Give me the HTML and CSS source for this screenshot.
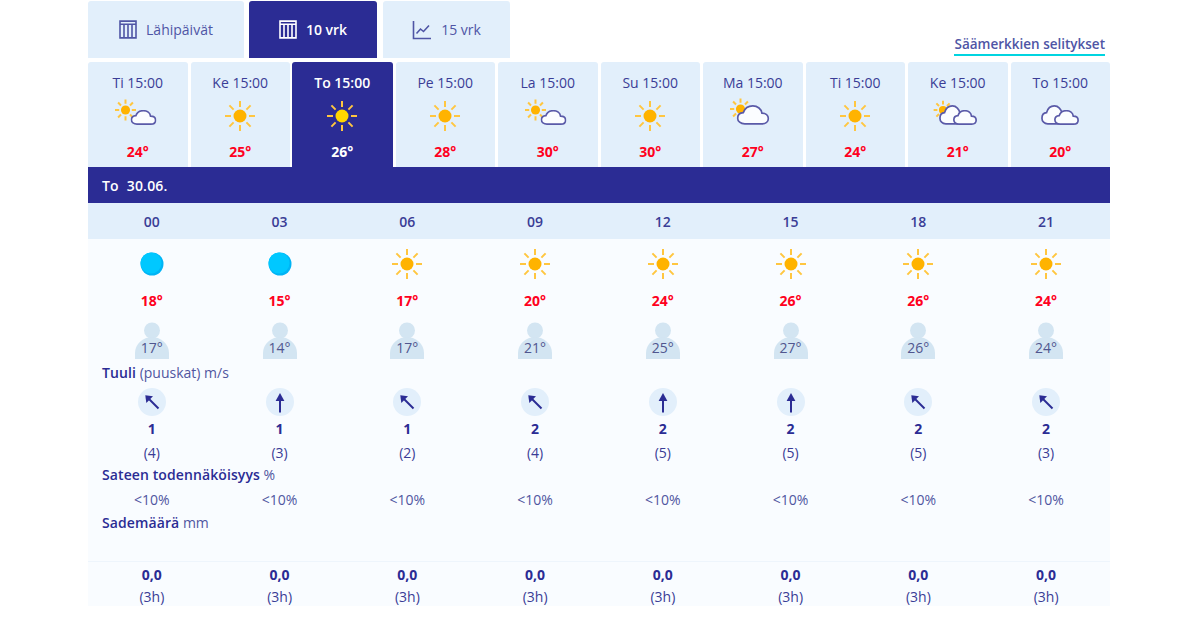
FILE: index.html
```html
<!DOCTYPE html>
<html lang="fi">
<head>
  <meta charset="UTF-8" />
  <title>Sää</title>
  <link rel="stylesheet" href="styles.css">
</head>
<body>
  <svg class="defs" width="0" height="0">
    <symbol id="sun" viewBox="0 0 32 32">
      <g class="rays">
        <path d="M16 1v6M16 25v6M1 16h6M25 16h6M5.400 5.400l4.200 4.200M22.400 22.400l4.200 4.200M5.400 26.600l4.200-4.200M22.400 9.600l4.200-4.200" />
      </g>
      <circle cx="16" cy="16" r="6.500" />
    </symbol>
    <symbol id="cloud" viewBox="0 0 34 21" preserveAspectRatio="none">
      <path class="cloud" d="M8.500 19.800C4.200 19.800 1.200 17.200 1.200 13.800 1.200 10.500 3.500 8.200 7 8 8.500 3.600 12.500 1 16.800 1c5 0 8.800 3.300 9.400 7.500 3.900.1 6.600 2.400 6.600 5.700 0 3.500-2.800 5.600-6.300 5.600z" />
    </symbol>
    <symbol id="calendar" viewBox="0 0 18 18" preserveAspectRatio="none">
      <path class="line" d="M1 1h16v16H1zM1 4h16M5 4v13M9 4v13M13 4v13" />
    </symbol>
    <symbol id="chart" viewBox="0 0 20 20" preserveAspectRatio="none">
      <path class="line" d="M1.500 1v17.500h17.500M4.500 13.500l4-4.500 3 2.500 5.500-6" />
    </symbol>
    <symbol id="night" viewBox="0 0 24 24">
      <circle cx="12" cy="12" r="11.500" fill="#00b4f5" />
      <circle cx="11" cy="11" r="10.500" fill="#00c8ff" />
    </symbol>
    <symbol id="person" viewBox="0 0 34 37">
      <circle cx="17" cy="8.500" r="8" fill="#d3e5f2" />
      <path d="M0 37V31C0 22 8 15 17 15s17 7 17 16v6z" fill="#d3e5f2" />
    </symbol>
    <symbol id="arrow" viewBox="0 0 28 28">
      <path class="arrow" d="M14 24.500V10" />
      <path d="M14 5l4.400 8H9.600z" fill="#2b2c94" />
    </symbol>
    <symbol id="arrow-nw" viewBox="0 0 28 28">
      <path class="arrow" d="M20.500 20.500L10 10" />
      <path d="M7.300 7.300l7.700 1-6.700 6.700z" fill="#2b2c94" />
    </symbol>
  </svg>

  <div class="page">
    <div class="top">
      <a class="tab tab-first"><svg class="tab-icon"><use href="#calendar" /></svg>Lähipäivät</a>
      <a class="tab tab-mid active"><svg class="tab-icon"><use href="#calendar" /></svg>10 vrk</a>
      <a class="tab tab-last"><svg class="tab-icon tab-icon-chart"><use href="#chart" /></svg>15 vrk</a>
      <a class="legend-link">Säämerkkien selitykset</a>
    </div>

    <div class="days">
      <div class="day">
        <div class="day-name">Ti 15:00</div>
        <svg class="day-icon"><use href="#sun" class="sun" x="-1.700" y="-1.200" width="22.400" height="22.400" /><use href="#cloud" x="14.500" y="10" width="26" height="15" /></svg>
        <div class="temp">24°</div>
      </div>
      <div class="day">
        <div class="day-name">Ke 15:00</div>
        <svg class="day-icon"><use href="#sun" class="sun" x="6" y="0" width="32" height="32" /></svg>
        <div class="temp">25°</div>
      </div>
      <div class="day active">
        <div class="day-name">To 15:00</div>
        <svg class="day-icon"><use href="#sun" class="sun bright" x="6" y="0" width="32" height="32" /></svg>
        <div class="temp">26°</div>
      </div>
      <div class="day">
        <div class="day-name">Pe 15:00</div>
        <svg class="day-icon"><use href="#sun" class="sun" x="6" y="0" width="32" height="32" /></svg>
        <div class="temp">28°</div>
      </div>
      <div class="day">
        <div class="day-name">La 15:00</div>
        <svg class="day-icon"><use href="#sun" class="sun" x="-1.700" y="-1.200" width="22.400" height="22.400" /><use href="#cloud" x="14.500" y="10" width="26" height="15" /></svg>
        <div class="temp">30°</div>
      </div>
      <div class="day">
        <div class="day-name">Su 15:00</div>
        <svg class="day-icon"><use href="#sun" class="sun" x="6" y="0" width="32" height="32" /></svg>
        <div class="temp">30°</div>
      </div>
      <div class="day">
        <div class="day-name">Ma 15:00</div>
        <svg class="day-icon"><use href="#sun" class="sun" x="-1.700" y="-2.200" width="22.400" height="22.400" /><use href="#cloud" x="5.500" y="5" width="33" height="20" /></svg>
        <div class="temp">27°</div>
      </div>
      <div class="day">
        <div class="day-name">Ti 15:00</div>
        <svg class="day-icon"><use href="#sun" class="sun" x="6" y="0" width="32" height="32" /></svg>
        <div class="temp">24°</div>
      </div>
      <div class="day">
        <div class="day-name">Ke 15:00</div>
        <svg class="day-icon"><use href="#sun" class="sun" x="-3" y="0" width="20" height="20" /><use href="#cloud" x="3" y="5" width="27" height="20" /><use href="#cloud" x="17" y="10" width="24" height="15" /></svg>
        <div class="temp">21°</div>
      </div>
      <div class="day">
        <div class="day-name">To 15:00</div>
        <svg class="day-icon"><use href="#cloud" x="3" y="5" width="27" height="20" /><use href="#cloud" x="16" y="10" width="25" height="15" /></svg>
        <div class="temp">20°</div>
      </div>
    </div>

    <div class="date-bar"><b>To</b> <b>30.06.</b></div>

    <div class="row hours">
      <div>00</div><div>03</div><div>06</div><div>09</div><div>12</div><div>15</div><div>18</div><div>21</div>
    </div>

    <div class="table">
      <div class="row icons">
        <svg class="night-icon"><use href="#night" /></svg>
        <svg class="night-icon"><use href="#night" /></svg>
        <svg class="sun-icon"><use href="#sun" class="sun" /></svg>
        <svg class="sun-icon"><use href="#sun" class="sun" /></svg>
        <svg class="sun-icon"><use href="#sun" class="sun" /></svg>
        <svg class="sun-icon"><use href="#sun" class="sun" /></svg>
        <svg class="sun-icon"><use href="#sun" class="sun" /></svg>
        <svg class="sun-icon"><use href="#sun" class="sun" /></svg>
      </div>
      <div class="row temps">
        <div>18°</div><div>15°</div><div>17°</div><div>20°</div><div>24°</div><div>26°</div><div>26°</div><div>24°</div>
      </div>
      <div class="row feels">
        <div class="feel"><svg><use href="#person" /></svg><span>17°</span></div>
        <div class="feel"><svg><use href="#person" /></svg><span>14°</span></div>
        <div class="feel"><svg><use href="#person" /></svg><span>17°</span></div>
        <div class="feel"><svg><use href="#person" /></svg><span>21°</span></div>
        <div class="feel"><svg><use href="#person" /></svg><span>25°</span></div>
        <div class="feel"><svg><use href="#person" /></svg><span>27°</span></div>
        <div class="feel"><svg><use href="#person" /></svg><span>26°</span></div>
        <div class="feel"><svg><use href="#person" /></svg><span>24°</span></div>
      </div>
      <div class="label label-wind"><b>Tuuli</b> (puuskat) m/s</div>
      <div class="row winds">
        <svg><use href="#arrow-nw" /></svg>
        <svg><use href="#arrow" /></svg>
        <svg><use href="#arrow-nw" /></svg>
        <svg><use href="#arrow-nw" /></svg>
        <svg><use href="#arrow" /></svg>
        <svg><use href="#arrow" /></svg>
        <svg><use href="#arrow-nw" /></svg>
        <svg><use href="#arrow-nw" /></svg>
      </div>
      <div class="row speed">
        <div>1</div><div>1</div><div>1</div><div>2</div><div>2</div><div>2</div><div>2</div><div>2</div>
      </div>
      <div class="row gust">
        <div>(4)</div><div>(3)</div><div>(2)</div><div>(4)</div><div>(5)</div><div>(5)</div><div>(5)</div><div>(3)</div>
      </div>
      <div class="label"><b>Sateen todennäköisyys</b> %</div>
      <div class="row prob">
        <div>&lt;10%</div><div>&lt;10%</div><div>&lt;10%</div><div>&lt;10%</div><div>&lt;10%</div><div>&lt;10%</div><div>&lt;10%</div><div>&lt;10%</div>
      </div>
      <div class="label label-rain"><b>Sademäärä</b> mm</div>
      <div class="row rain">
        <div>0,0</div><div>0,0</div><div>0,0</div><div>0,0</div><div>0,0</div><div>0,0</div><div>0,0</div><div>0,0</div>
      </div>
      <div class="row rain-span">
        <div>(3h)</div><div>(3h)</div><div>(3h)</div><div>(3h)</div><div>(3h)</div><div>(3h)</div><div>(3h)</div><div>(3h)</div>
      </div>
    </div>
  </div>
</body>
</html>
```
FILE: styles.css
```css
body {
  margin: 0;
  background: #fff;
  color: #3a3d96;
  font-family: "Open Sans", "Noto Sans", sans-serif;
  font-size: 14px;
}
b {
  font-weight: 600;
}
.defs {
  display: block;
  height: 0;
}
.page {
  width: 1022px;
  margin-left: 88px;
  padding-top: 1px;
}

/* tabs */
.top {
  display: flex;
  height: 57px;
}
.tab {
  display: flex;
  align-items: center;
  justify-content: center;
  gap: 9px;
  background: #e2effb;
  border-radius: 3px 3px 0 0;
  color: #4f55a5;
}
.tab-first {
  width: 156px;
}
.tab-mid {
  width: 128px;
  margin-left: 5px;
}
.tab-last {
  width: 127px;
  margin-left: 6px;
}
.tab.active {
  background: #2b2c94;
  color: #fff;
  font-weight: 600;
}
.tab-icon {
  width: 18px;
  height: 19px;
}
.tab-icon-chart {
  width: 20px;
  height: 20px;
}
.line {
  fill: none;
  stroke: currentColor;
  stroke-width: 1.600;
}
.legend-link {
  align-self: flex-end;
  margin: 0 5px 2px auto;
  padding-bottom: 1px;
  border-bottom: 2px solid #00d4e0;
  font-weight: 600;
  font-size: 13.500px;
  line-height: 18px;
  color: #4f55a5;
}

/* day tabs */
.days {
  display: grid;
  grid-template-columns: repeat(10, 1fr);
  gap: 3px;
  margin-top: 4px;
  height: 105px;
}
.day {
  display: flex;
  flex-direction: column;
  align-items: center;
  background: #e2effb;
  border-radius: 3px 3px 0 0;
  padding-top: 11px;
}
.day-name {
  line-height: 20px;
}
.day-icon {
  width: 44px;
  height: 32px;
  margin-top: 7px;
  overflow: visible;
}
.temp {
  margin-top: 10px;
  line-height: 20px;
  font-weight: 700;
  color: #ff0020;
}
.day.active {
  margin-left: -1px;
  background: #2b2c94;
  color: #fff;
}
.day.active .day-name {
  font-weight: 600;
}
.day.active .temp {
  color: #fff;
}
.rays path {
  fill: none;
  stroke: #ffc640;
  stroke-width: 2;
  vector-effect: non-scaling-stroke;
}
.sun {
  fill: #ffb300;
}
.sun.bright {
  fill: #ffd600;
}
.cloud {
  fill: #fbfdff;
  stroke: #5a5aa8;
  stroke-width: 1.700;
  vector-effect: non-scaling-stroke;
}

.date-bar {
  height: 36px;
  padding-left: 14px;
  background: #2b2c94;
  color: #fff;
  line-height: 37px;
  word-spacing: 4px;
  letter-spacing: 0.200px;
}

/* hourly table */
.row {
  display: grid;
  grid-template-columns: repeat(8, 1fr);
  justify-items: center;
  align-items: center;
}
.hours {
  height: 36px;
  background: #e2effb;
  font-weight: 600;
}
.table {
  background: #f9fcff;
  height: 367px;
}
.icons {
  height: 50px;
}
.sun-icon {
  width: 32px;
  height: 32px;
}
.night-icon {
  width: 24px;
  height: 24px;
}
.temps {
  height: 22px;
  font-weight: 700;
  color: #ff0020;
}
.feels {
  margin-top: 11px;
  height: 37px;
}
.feel {
  position: relative;
  width: 34px;
  height: 37px;
}
.feel svg {
  display: block;
  width: 34px;
  height: 37px;
}
.feel span {
  position: absolute;
  left: 0;
  right: 0;
  bottom: 3px;
  text-align: center;
  line-height: 16px;
  color: #50568f;
}
.label {
  height: 22px;
  padding-left: 14px;
  line-height: 22px;
  color: #50569f;
}
.label b {
  color: #2b2c94;
  letter-spacing: 0.100px;
}
.label-wind {
  margin-top: 3px;
}
.winds {
  margin-top: 4px;
  height: 28px;
}
.winds svg {
  width: 28px;
  height: 28px;
  border-radius: 50%;
  background: #e2effb;
}
.arrow {
  fill: none;
  stroke: #2b2c94;
  stroke-width: 2;
}
.speed {
  height: 24px;
  font-weight: 700;
  color: #2b2c94;
}
.gust {
  height: 24px;
}
.prob {
  margin-top: 1px;
  height: 24px;
  margin-bottom: 1px;
  color: #50569f;
}
.rain {
  margin-top: 27px;
  height: 25px;
  border-top: 1px solid #eef5fc;
  font-weight: 700;
  color: #2b2c94;
}
.rain-span {
  height: 19px;
}
```
